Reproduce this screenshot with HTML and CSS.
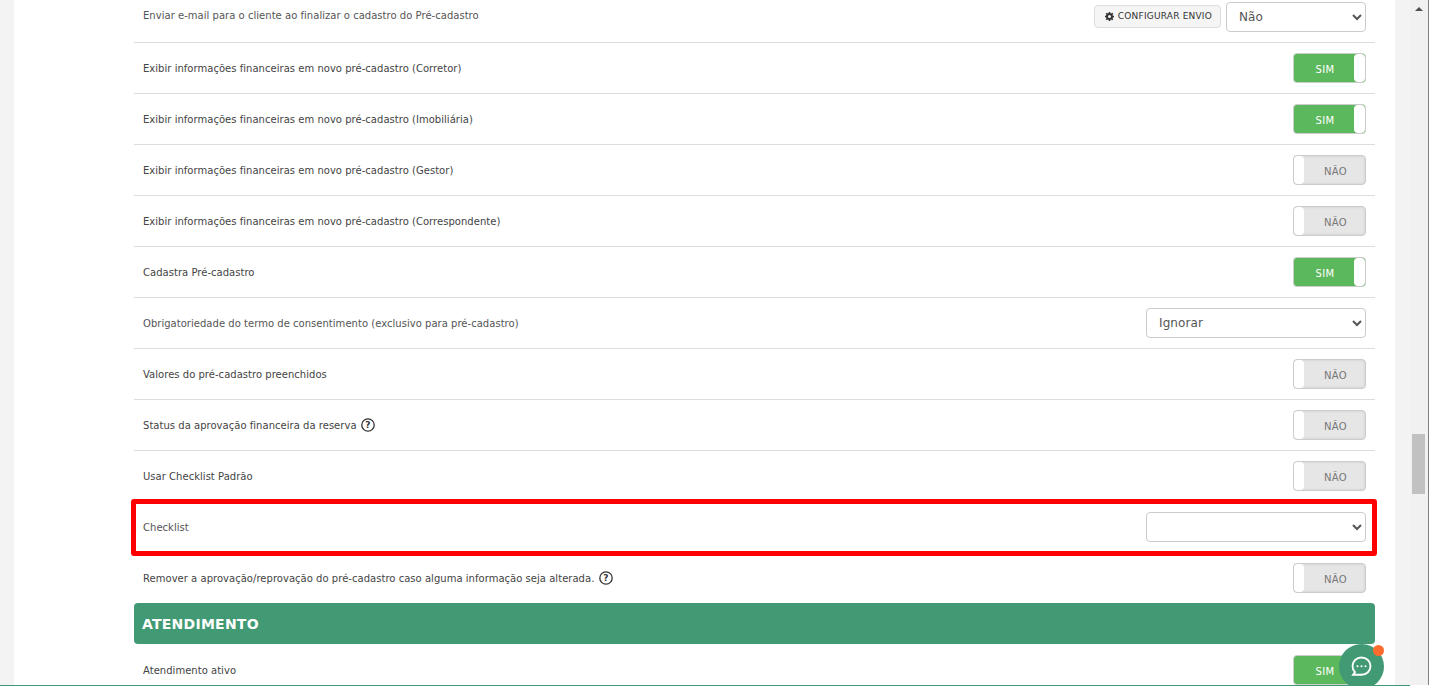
FILE: index.html
```html
<!DOCTYPE html>
<html lang="pt-BR">
<head>
<meta charset="utf-8">
<title>Configurações</title>
<link rel="stylesheet" href="styles.css">
</head>
<body>
<div class="window">
  <div class="viewport">
    <main class="sheet">
      <div class="rows">
        <div class="row muted first"><span class="label">Enviar e-mail para o cliente ao finalizar o cadastro do Pré-cadastro</span>
          <div class="controls">
            <button class="btn" type="button"><svg class="gear" viewBox="0 0 16 16"><path d="M6.7 0h2.6l.4 2.2 1.3.6L12.900 1.500l1.800 1.800-1.300 1.900.5 1.300 2.100.3v2.600l-2.100.4-.5 1.300 1.300 1.800-1.800 1.800-1.900-1.300-1.200.5-.4 2.100H6.700l-.4-2.100-1.300-.5-1.800 1.300-1.900-1.800 1.300-1.900-.5-1.200L0 9.400V6.800l2.100-.4.500-1.300-1.300-1.800 1.900-1.800L5 2.800l1.300-.6z M8 5.300a2.700 2.700 0 1 0 0 5.400 2.700 2.700 0 0 0 0-5.400z" fill-rule="evenodd"/></svg>CONFIGURAR ENVIO</button>
            <select class="select small"><option>Não</option></select>
          </div>
        </div>
        <div class="row"><span class="label">Exibir informações financeiras em novo pré-cadastro (Corretor)</span><div class="toggle on"><span class="state">SIM</span><span class="knob"></span></div></div>
        <div class="row"><span class="label">Exibir informações financeiras em novo pré-cadastro (Imobiliária)</span><div class="toggle on"><span class="state">SIM</span><span class="knob"></span></div></div>
        <div class="row"><span class="label">Exibir informações financeiras em novo pré-cadastro (Gestor)</span><div class="toggle off"><span class="knob"></span><span class="state">NÃO</span></div></div>
        <div class="row"><span class="label">Exibir informações financeiras em novo pré-cadastro (Correspondente)</span><div class="toggle off"><span class="knob"></span><span class="state">NÃO</span></div></div>
        <div class="row"><span class="label">Cadastra Pré-cadastro</span><div class="toggle on"><span class="state">SIM</span><span class="knob"></span></div></div>
        <div class="row muted"><span class="label">Obrigatoriedade do termo de consentimento (exclusivo para pré-cadastro)</span><select class="select wide"><option>Ignorar</option></select></div>
        <div class="row"><span class="label">Valores do pré-cadastro preenchidos</span><div class="toggle off"><span class="knob"></span><span class="state">NÃO</span></div></div>
        <div class="row"><span class="label">Status da aprovação financeira da reserva <svg class="help" viewBox="0 0 14 14"><circle cx="7" cy="7" r="6.200"/><text x="7" y="10.300" text-anchor="middle">?</text></svg></span><div class="toggle off"><span class="knob"></span><span class="state">NÃO</span></div></div>
        <div class="row"><span class="label">Usar Checklist Padrão</span><div class="toggle off"><span class="knob"></span><span class="state">NÃO</span></div></div>
        <div class="row muted"><span class="label">Checklist</span><select class="select wide"><option></option></select></div>
        <div class="row plain"><span class="label">Remover a aprovação/reprovação do pré-cadastro caso alguma informação seja alterada. <svg class="help" viewBox="0 0 14 14"><circle cx="7" cy="7" r="6.200"/><text x="7" y="10.300" text-anchor="middle">?</text></svg></span><div class="toggle off"><span class="knob"></span><span class="state">NÃO</span></div></div>
        <h2 class="section">ATENDIMENTO</h2>
        <div class="row plain"><span class="label">Atendimento ativo</span><div class="toggle on"><span class="state">SIM</span><span class="knob"></span></div></div>
      </div>
      <div class="highlight"></div>
    </main>
    <div class="gutter"></div>
    <div class="scrollbar"><span class="arrow"></span><span class="thumb"></span></div>
    <div class="edge"></div>
    <button class="chat" type="button" aria-label="Chat"><svg viewBox="0 0 24 24"><path d="M12 2.600c5.300 0 9.400 3.900 9.400 9s-4.100 9-9.400 9H3.200l2-2.800C3.500 16.200 2.600 14 2.600 11.600c0-5.100 4.100-9 9.400-9z"/><circle class="dot" cx="7.800" cy="11.700" r="1.100"/><circle class="dot" cx="12" cy="11.700" r="1.100"/><circle class="dot" cx="16.200" cy="11.700" r="1.100"/></svg><span class="badge"></span></button>
  </div>
  <div class="baseline"></div>
</div>
</body>
</html>
```

FILE: styles.css
```css
* { box-sizing: border-box; }
html, body { margin: 0; padding: 0; height: 100%; overflow: hidden; background: #fff; }
body { font-family: "DejaVu Sans", Verdana, sans-serif; font-size: 10px; color: #444; }

.window { display: flex; flex-direction: column; height: 686px; }
.viewport { position: relative; display: flex; height: 685px; overflow: hidden; background: #f3f3f3; padding-left: 14px; }
.baseline { height: 1px; width: 1410px; background: #3f9a74; }

.sheet { position: relative; width: 1381px; flex: none; background: #fff; padding: 0 20px 0 120px; overflow: hidden; }
.rows { margin-top: -8px; }
.gutter { width: 15px; flex: none; }

.scrollbar { position: relative; width: 17px; flex: none; background: #f1f1f1; display: flex; flex-direction: column; align-items: center; }
.arrow { margin-top: 7px; width: 0; height: 0; border-left: 4px solid transparent; border-right: 4px solid transparent; border-bottom: 4px solid #505050; }
.thumb { margin-top: 423px; width: 13px; height: 60px; background: #c1c1c1; }
.edge { width: 2px; flex: none; background: #f1f1f1; border-right: 1px solid #808080; }

.row { display: flex; align-items: center; justify-content: space-between; height: 51px; padding: 0 9px; border-bottom: 1px solid #ddd; }
.row.plain { height: 50px; border-bottom: 0; }
.row.muted .label { color: #555; }
.row.first .label { margin-bottom: 3px; }
.label { display: flex; align-items: center; gap: 1px; letter-spacing: .03px; white-space: pre; }
.controls { display: flex; align-items: center; gap: 5px; }

.btn { display: flex; align-items: center; gap: 4px; height: 23px; margin-bottom: 2px; padding: 0 8px 0 10px; font: 9px "DejaVu Sans", Verdana, sans-serif; letter-spacing: .2px; color: #333; background: #f5f5f5; border: 1px solid #ddd; border-radius: 4px; }
.gear { width: 9px; height: 9px; fill: #333; }

.select { height: 30px; padding: 0 8px; font: 12px "DejaVu Sans", Verdana, sans-serif; letter-spacing: .1px; color: #555; background: #fff; border: 1px solid #ccc; border-radius: 4px; }
.select.small { width: 140px; }
.select.wide { width: 220px; }

.toggle { display: flex; width: 73px; height: 30px; border: 1px solid #ccc; border-radius: 4px; overflow: hidden; }
.toggle .state { flex: 1; display: flex; align-items: center; justify-content: center; padding: 3px 0 0 2px; font-size: 10px; letter-spacing: .3px; }
.toggle .knob { width: 11px; flex: none; background: #fff; border-radius: 4px; }
.toggle.on { background: #5cb85c; }
.toggle.on .state { color: #fff; }
.toggle.off { background: #e6e6e6; box-shadow: inset 0 0 3px rgba(0,0,0,.12); }
.toggle.off .knob { width: 10px; }
.toggle.off .state { color: #777; }

.help { width: 14px; height: 14px; flex: none; }
.help circle { fill: none; stroke: #333; stroke-width: 1.300; }
.help text { font: bold 9px "DejaVu Sans", Verdana, sans-serif; fill: #333; }

.section { height: 41px; margin: 0 0 1px; padding: 0 8px; display: flex; align-items: center; font: bold 14px "DejaVu Sans", Verdana, sans-serif; letter-spacing: .25px; color: #fff; background: #419a74; border-radius: 4px; }

.highlight { position: absolute; left: 117px; top: 499px; width: 1246px; height: 57px; border: 5px solid #f00; border-radius: 3px; }

.chat { position: absolute; left: 1339px; top: 644px; width: 45px; height: 45px; padding: 0; border: 0; border-radius: 50%; background: #419a74; display: flex; align-items: center; justify-content: center; }
.chat svg { width: 23px; height: 23px; fill: none; stroke: #fff; stroke-width: 1.900; }
.chat .dot { fill: #fff; stroke: none; }
.badge { position: absolute; left: 34px; top: 1px; width: 11px; height: 11px; border-radius: 50%; background: #ff6b2c; }
```
